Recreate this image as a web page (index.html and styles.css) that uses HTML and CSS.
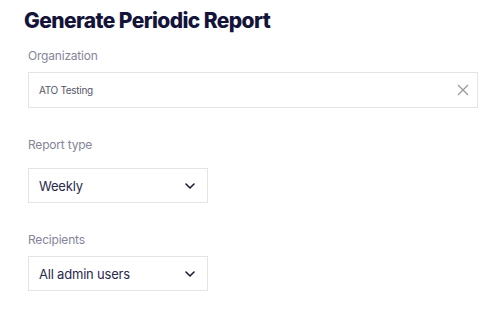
FILE: index.html
```html
<!DOCTYPE html>
<html lang="en">
<head>
<meta charset="utf-8">
<title>Generate Periodic Report</title>
<link rel="stylesheet" href="styles.css">
</head>
<body>
<div class="page">
  <h1 class="title">Generate Periodic Report</h1>
  <div class="fields">
    <div class="field">
      <div class="label">Organization</div>
      <div class="box box-wide">
        <span class="value value-small">ATO Testing</span>
        <svg class="clear" width="12" height="12" viewBox="0 0 12 12"><path d="M1 1 L11 11 M11 1 L1 11" stroke="#9a9a9a" stroke-width="1.3" fill="none"/></svg>
      </div>
    </div>
    <div class="field">
      <div class="label label-loose">Report type</div>
      <div class="box box-select">
        <span class="value">Weekly</span>
        <svg class="chev" width="10" height="6" viewBox="0 0 10 6"><path d="M1 1 L5 5 L9 1" stroke="#1c1c3c" stroke-width="1.6" fill="none" stroke-linecap="round" stroke-linejoin="round"/></svg>
      </div>
    </div>
    <div class="field">
      <div class="label">Recipients</div>
      <div class="box box-select">
        <span class="value">All admin users</span>
        <svg class="chev" width="10" height="6" viewBox="0 0 10 6"><path d="M1 1 L5 5 L9 1" stroke="#1c1c3c" stroke-width="1.6" fill="none" stroke-linecap="round" stroke-linejoin="round"/></svg>
      </div>
    </div>
  </div>
</div>
</body>
</html>
```
FILE: styles.css
```css
* { box-sizing: border-box; }
html, body { margin: 0; padding: 0; background: #ffffff; }
body { font-family: Inter, "Noto Sans", sans-serif; }
.page { padding: 7px 0 0 24px; }
.title {
  margin: 0;
  font-size: 21px;
  line-height: 28px;
  font-weight: 800;
  color: #14143a;
  letter-spacing: -0.6px;
}
.fields {
  display: flex;
  flex-direction: column;
  gap: 29px;
  padding: 13px 0 0 4px;
}
.field { display: flex; flex-direction: column; }
.label {
  font-size: 12px;
  line-height: 16px;
  color: #85859a;
  margin-bottom: 8px;
  letter-spacing: -0.2px;
}
.label-loose { margin-bottom: 15px; }
.box {
  display: flex;
  align-items: center;
  justify-content: space-between;
  border: 1px solid #e4e4e4;
  background: #fff;
  padding: 0 13px 0 10px;
}
.box-wide { width: 450px; height: 36px; padding-right: 8px; }
.box-select { width: 180px; height: 35px; padding-right: 12px; }
.value {
  font-size: 13px;
  color: #2a2a4c;
  letter-spacing: -0.2px;
}
.value-small { font-size: 10px; color: #55556a; letter-spacing: -0.3px; }
.clear { display: block; }
.chev { display: block; }
```
